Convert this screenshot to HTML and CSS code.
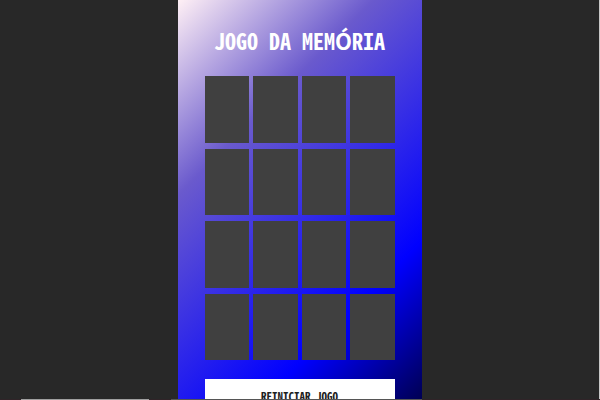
FILE: index.html
```html
<!DOCTYPE html>
<html lang="pt-BR">
<head>
<meta charset="utf-8">
<title>Jogo da Memória</title>
<link rel="stylesheet" href="styles.css">
</head>
<body>
<main class="game">
  <h1 class="title">JOGO DA MEMÓRIA</h1>
  <div class="board">
    <div class="card"></div><div class="card"></div><div class="card"></div><div class="card"></div>
    <div class="card"></div><div class="card"></div><div class="card"></div><div class="card"></div>
    <div class="card"></div><div class="card"></div><div class="card"></div><div class="card"></div>
    <div class="card"></div><div class="card"></div><div class="card"></div><div class="card"></div>
  </div>
  <button class="restart" type="button">REINICIAR JOGO</button>
</main>
<div class="edge"></div>
</body>
</html>
```

FILE: styles.css
```css
* {
  box-sizing: border-box;
}

body {
  margin: 0;
  height: 100vh;
  overflow: hidden;
  display: flex;
  justify-content: center;
  align-items: flex-start;
  background: #282828;
  border-right: 1px solid #c8c8c8;
  font-family: "Noto Sans Mono CJK JP", "DejaVu Sans Mono", monospace;
}

.game {
  width: 100%;
  max-width: 244px;
  min-height: 100vh;
  padding: 24px 27px 40px;
  background: linear-gradient(135deg, #fff0f5 0, #6a5acd 138px, #0000ff 343px, #000000 509px);
}

.title {
  margin: 0 -20px 20px;
  color: #ffffff;
  font-size: 22px;
  line-height: 32px;
  font-weight: 700;
  text-align: center;
  white-space: nowrap;
}

.board {
  display: grid;
  grid-template-columns: repeat(4, 1fr);
  grid-template-rows: repeat(4, 1fr);
  gap: 6px 4px;
  height: 284px;
}

.card {
  background: #404040;
}

.restart {
  display: block;
  width: 100%;
  height: 34px;
  margin-top: 19px;
  padding: 0;
  border: 0;
  background: #ffffff;
  color: #202020;
  font-family: inherit;
  font-size: 11px;
  font-weight: 700;
}

/* Thin horizontal scrollbar along the window's lower edge */
.edge {
  position: fixed;
  left: 0;
  right: 0;
  bottom: 0;
  height: 1px;
  background: linear-gradient(90deg, #302428 0 21px, #a0a0a0 21px 149px, #302428 149px 171px, #555555 171px 422px, #302428 422px);
}
```
